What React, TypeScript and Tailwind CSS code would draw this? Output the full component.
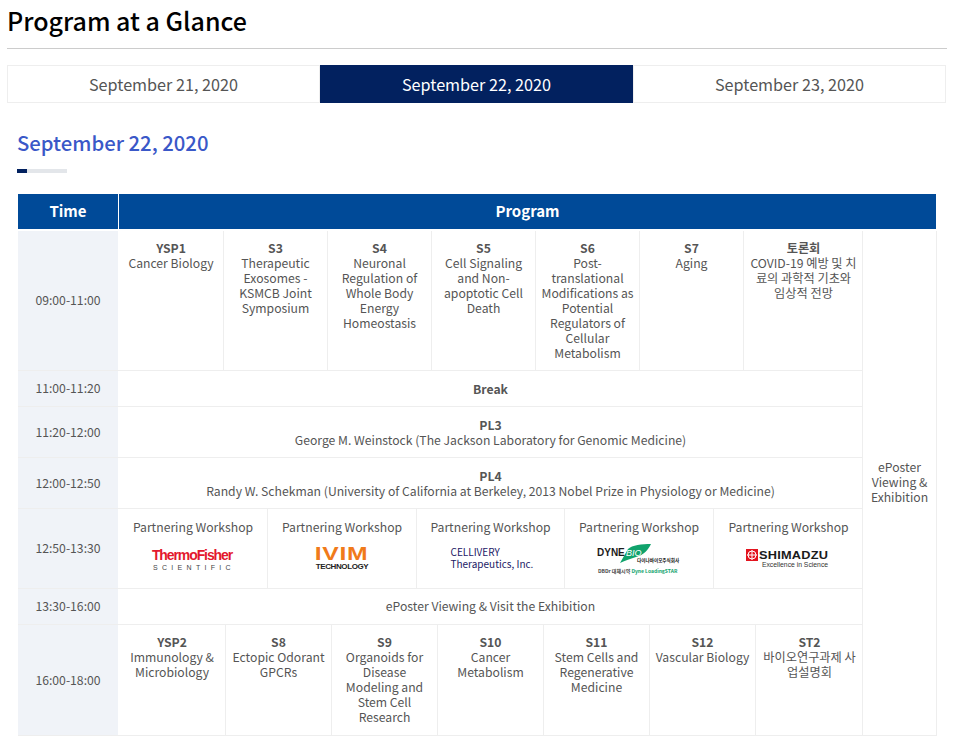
const font = { fontFamily: '"Noto Sans CJK KR", "Noto Sans", sans-serif' }

interface Session {
  code: string
  title: string
  w: string
}

const morning: Session[] = [
  { code: 'YSP1', title: 'Cancer Biology', w: 'w-[105px]' },
  { code: 'S3', title: 'Therapeutic Exosomes - KSMCB Joint Symposium', w: 'w-[104px]' },
  { code: 'S4', title: 'Neuronal Regulation of Whole Body Energy Homeostasis', w: 'w-[104px]' },
  { code: 'S5', title: 'Cell Signaling and Non-apoptotic Cell Death', w: 'w-[104px]' },
  { code: 'S6', title: 'Post-translational Modifications as Potential Regulators of Cellular Metabolism', w: 'w-[104px]' },
  { code: 'S7', title: 'Aging', w: 'w-[104px]' },
  { code: '토론회', title: 'COVID-19 예방 및 치료의 과학적 기초와 임상적 전망', w: 'w-[119px]' },
]

const evening: Session[] = [
  { code: 'YSP2', title: 'Immunology & Microbiology', w: 'w-[107px]' },
  { code: 'S8', title: 'Ectopic Odorant GPCRs', w: 'w-[106px]' },
  { code: 'S9', title: 'Organoids for Disease Modeling and Stem Cell Research', w: 'w-[106px]' },
  { code: 'S10', title: 'Cancer Metabolism', w: 'w-[106px]' },
  { code: 'S11', title: 'Stem Cells and Regenerative Medicine', w: 'w-[106px]' },
  { code: 'S12', title: 'Vascular Biology', w: 'w-[106px]' },
  { code: 'ST2', title: '바이오연구과제 사업설명회', w: 'w-[107px]' },
]

function TimeCell({ children }: { children: string }) {
  return (
    <div className="w-[100px] shrink-0 flex items-center justify-center bg-[#f0f3f8] mr-px text-[12.2px] text-[#555]">
      {children}
    </div>
  )
}

function SessionRow({ items }: { items: Session[] }) {
  return (
    <div className="flex flex-1">
      {items.map((s, i) => (
        <div
          key={s.code}
          className={`${s.w} shrink-0 px-[5px] pt-[10px] text-center text-[12.2px] leading-[15px] text-[#555] ${i < items.length - 1 ? 'border-r border-[#eeeeee]' : ''}`}
        >
          <div className="font-bold">{s.code}</div>
          <div className={s.code === '토론회' || s.code === 'ST2' ? 'break-all' : 'break-keep'}>{s.title}</div>
        </div>
      ))}
    </div>
  )
}

function ThermoLogo() {
  return (
    <div className="flex flex-col items-center leading-none -ml-[2px]" style={{ fontFamily: '"Liberation Sans", sans-serif' }}>
      <div className="text-[14px] font-bold tracking-[-1.1px] text-[#e3182d]">ThermoFisher</div>
      <div className="text-[7px] tracking-[4.3px] text-[#444] mt-[2px] ml-[4px]">SCIENTIFIC</div>
    </div>
  )
}

function IvimLogo() {
  return (
    <div className="flex flex-col items-center leading-none -mt-[2px]" style={{ fontFamily: '"Liberation Sans", sans-serif' }}>
      <div className="text-[19px] font-bold tracking-[0.5px] text-[#f07a1a] h-[15px] leading-[15px] scale-x-[1.3]">IVIM</div>
      <div className="text-[8px] font-bold tracking-[-0.4px] text-[#222] mt-[2px]">TECHNOLOGY</div>
    </div>
  )
}

function CelliveryLogo() {
  return (
    <div className="flex flex-col leading-[12px] text-[#1c2066] text-[10px] -mr-[2px] -mt-[2px] w-[82px]">
      <div>CELLIVERY</div>
      <div className="whitespace-nowrap">Therapeutics, Inc.</div>
    </div>
  )
}

function DyneLogo() {
  return (
    <div className="relative w-[82px] h-[30px] -ml-[2px]">
      <svg className="absolute left-[23px] top-0" width="31" height="20" viewBox="0 0 31 20">
        <path d="M0 19 L8 5 C12 1 22 0 31 0 C28 6 24 11 16 13 C10 15 4 17 0 19 Z" fill="#10a36c" />
      </svg>
      <div className="absolute left-0 top-[4px] text-[10px] font-bold leading-[10px] text-[#1b1b1b]" style={{ fontFamily: '"Liberation Sans", sans-serif' }}>DYNE</div>
      <div className="absolute left-[29px] top-[4px] text-[9px] leading-[10px] italic text-white" style={{ fontFamily: '"Liberation Sans", sans-serif' }}>BIO</div>
      <div className="absolute left-[40px] top-[13px] text-[4.6px] leading-[7px] font-bold text-[#111] whitespace-nowrap">다이나바이오주식회사</div>
      <div className="absolute left-[1px] top-[23px] text-[5px] leading-[7px] font-bold text-[#444] whitespace-nowrap">
        DBDr 대체시약 <span className="text-[#10a36c]">Dyne LoadingSTAR</span>
      </div>
    </div>
  )
}

function ShimadzuLogo() {
  return (
    <div className="flex flex-col items-center leading-none -ml-[2px]" style={{ fontFamily: '"Liberation Sans", sans-serif' }}>
      <div className="flex items-center">
        <svg width="12" height="12" viewBox="0 0 12 12" className="mr-[1px]">
          <rect width="12" height="12" fill="#e3141f" />
          <circle cx="6" cy="6" r="4" fill="none" stroke="#fff" strokeWidth="1" />
          <path d="M6 1v10M1 6h10" stroke="#fff" strokeWidth="1" />
        </svg>
        <span className="text-[11px] font-bold text-[#1a1a1a] scale-x-[1.16] origin-left w-[70px] tracking-[0.2px]">SHIMADZU</span>
      </div>
      <div className="text-[6.8px] text-[#333] ml-[15px] mt-[1px]">Excellence in Science</div>
    </div>
  )
}

const partners = [
  { w: 'w-[149px]', logo: <ThermoLogo /> },
  { w: 'w-[149px]', logo: <IvimLogo /> },
  { w: 'w-[148px]', logo: <CelliveryLogo /> },
  { w: 'w-[149px]', logo: <DyneLogo /> },
  { w: 'w-[149px]', logo: <ShimadzuLogo /> },
]

function Row({ time, h, children }: { time: string; h: string; children: React.ReactNode }) {
  return (
    <div className={`flex ${h} border-b border-[#eeeeee]`}>
      <TimeCell>{time}</TimeCell>
      {children}
    </div>
  )
}

function Full({ children }: { children: React.ReactNode }) {
  return <div className="flex-1 flex flex-col items-center justify-center pt-[2px] text-[12.2px] leading-[15px] text-[#555]">{children}</div>
}

export default function App() {
  const tabs = ['September 21, 2020', 'September 22, 2020', 'September 23, 2020']
  return (
    <div className="bg-white w-[958px] h-[747px] overflow-hidden pl-[7px] text-[#555]" style={font}>
      <h1 className="text-[25px] leading-[42px] font-medium text-black -mt-[1px] pb-[1px]">Program at a Glance</h1>
      <div className="w-[940px] h-px bg-[#cccccc] mt-[6px]" />

      <div className="flex w-[939px] h-[38px] mt-[16px]">
        {tabs.map((t, i) => (
          <div
            key={t}
            className={`w-[313px] flex items-center justify-center text-[16.2px] ${i === 1 ? 'bg-[#02215f] text-white' : 'border border-[#eeeeee] text-[#555]'}`}
          >
            {t}
          </div>
        ))}
      </div>

      <h2 className="text-[20.3px] leading-[30px] font-medium text-[#3a58c8] ml-[10px] mt-[24px]">September 22, 2020</h2>
      <div className="w-[50px] h-[4px] bg-[#e3e6ea] ml-[10px] mt-[12px]">
        <div className="w-[10px] h-[4px] bg-[#02215f]" />
      </div>

      <div className="ml-[11px] w-[919px] mt-[21px]">
        <div className="flex h-[35px] w-[918px] text-white text-[15px] font-bold">
          <div className="w-[100px] flex items-center justify-center bg-[#004a98] mr-px">Time</div>
          <div className="flex-1 flex items-center justify-center bg-[#004a98]">Program</div>
        </div>

        <div className="flex mt-[2px]">
          <div className="w-[844px] shrink-0">
            <Row time="09:00-11:00" h="h-[140px]">
              <SessionRow items={morning} />
            </Row>
            <Row time="11:00-11:20" h="h-[36px]">
              <Full><b className="font-bold">Break</b></Full>
            </Row>
            <Row time="11:20-12:00" h="h-[51px]">
              <Full>
                <b className="font-bold">PL3</b>
                <span>George M. Weinstock (The Jackson Laboratory for Genomic Medicine)</span>
              </Full>
            </Row>
            <Row time="12:00-12:50" h="h-[51px]">
              <Full>
                <b className="font-bold">PL4</b>
                <span>Randy W. Schekman (University of California at Berkeley, 2013 Nobel Prize in Physiology or Medicine)</span>
              </Full>
            </Row>
            <Row time="12:50-13:30" h="h-[80px]">
              <div className="flex flex-1">
                {partners.map((p, i) => (
                  <div
                    key={i}
                    className={`${p.w} shrink-0 flex flex-col items-center pt-[11px] text-[12.2px] leading-[15px] text-[#555] ${i < 4 ? 'border-r border-[#eeeeee]' : ''}`}
                  >
                    <div>Partnering Workshop</div>
                    <div className="h-[32px] mt-[8px] flex items-center justify-center">{p.logo}</div>
                  </div>
                ))}
              </div>
            </Row>
            <Row time="13:30-16:00" h="h-[36px]">
              <Full><span className="-mt-[2px]">ePoster Viewing &amp; Visit the Exhibition</span></Full>
            </Row>
            <Row time="16:00-18:00" h="h-[111px]">
              <SessionRow items={evening} />
            </Row>
          </div>
          <div className="w-[75px] border-x border-b border-[#eeeeee] flex items-center justify-center text-center text-[12.2px] leading-[15px] text-[#555] pb-[1px]">
            <div className="w-[64px]">ePoster Viewing &amp; Exhibition</div>
          </div>
        </div>
      </div>
    </div>
  )
}
